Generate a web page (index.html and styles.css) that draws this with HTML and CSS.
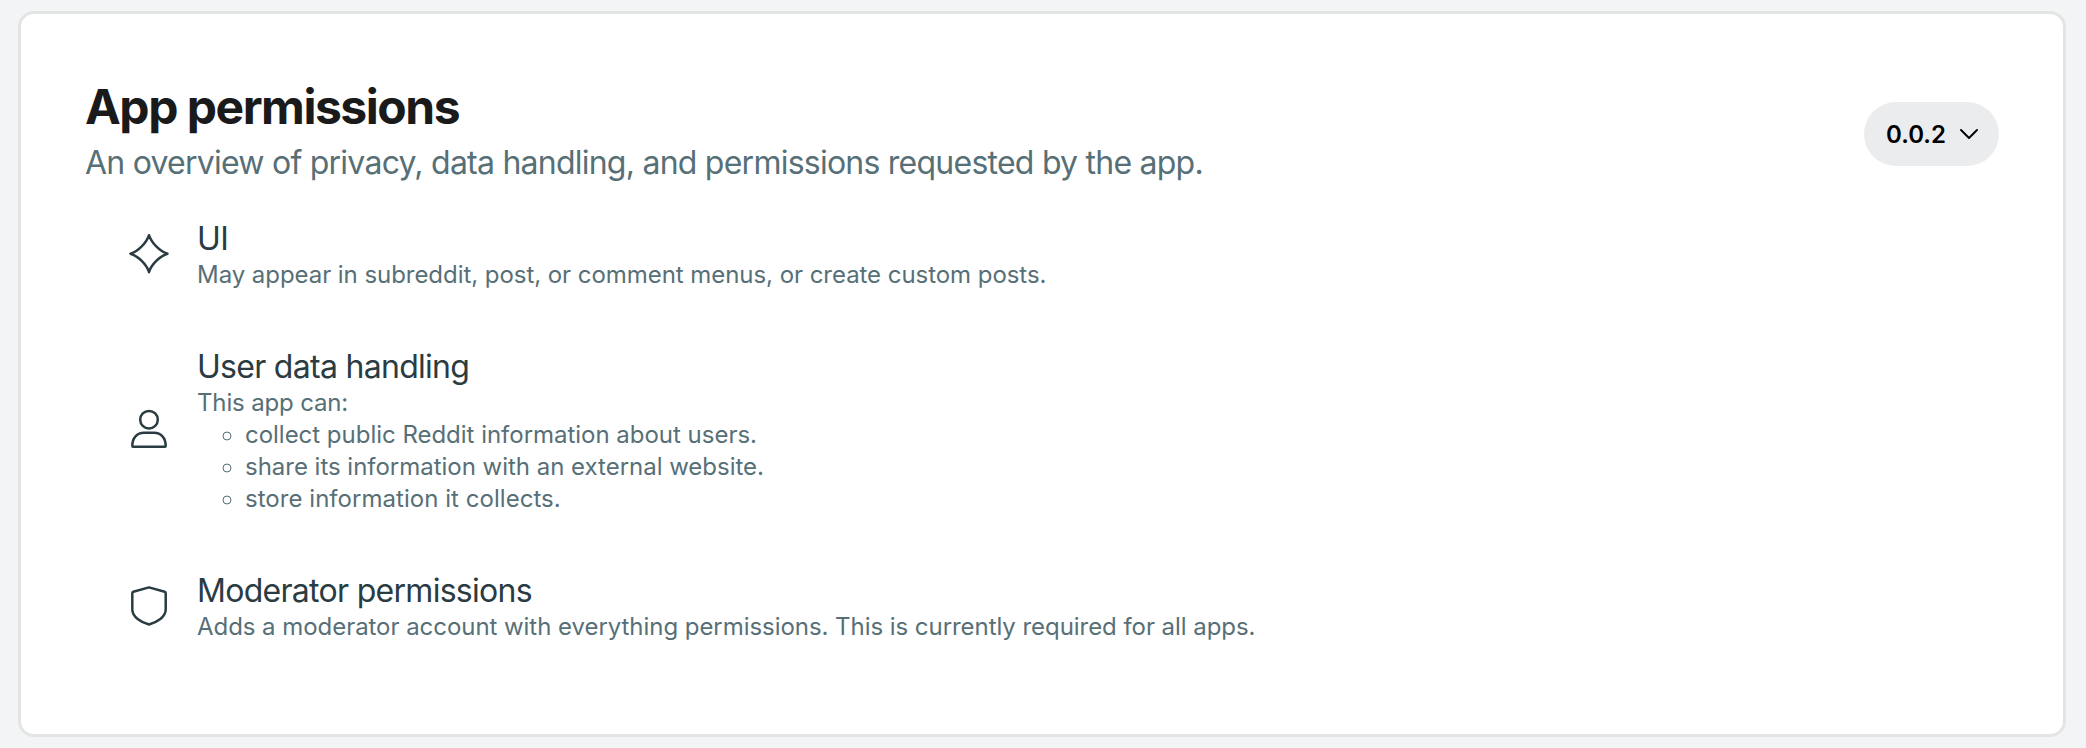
FILE: index.html
```html
<!DOCTYPE html>
<html lang="en"><head><meta charset="utf-8"><title>App permissions</title><link rel="stylesheet" href="styles.css"></head>
<body>
<main class="card">
<header class="header">
<div><h1 class="title">App permissions</h1><p class="subtitle">An overview of privacy, data handling, and permissions requested by the app.</p></div>
<button class="version">0.0.2<svg class="chevron" viewBox="0 0 18 10"><path d="M1 1l8 8 8-8"/></svg></button>
</header>
<ul class="permissions">
<li class="permission">
<svg class="icon" viewBox="0 1.300 42 42"><path d="M21 2.500C23.200 10 32 18.800 39.500 21C32 23.200 23.200 32 21 39.500C18.800 32 10 23.200 2.500 21C10 18.800 18.800 10 21 2.500Z"/></svg>
<div><h2 class="name name-short">UI</h2><p class="text">May appear in subreddit, post, or comment menus, or create custom posts.</p></div>
</li>
<li class="permission">
<svg class="icon" viewBox="0 2.200 42 42"><circle cx="21" cy="11.900" r="8.800"/><path d="M5 39Q4.300 39 4.300 38C4.300 30 9 25 16 25H26C33 25 37.700 30 37.700 38Q37.700 39 37 39Z"/></svg>
<div><h2 class="name">User data handling</h2><p class="text text-intro">This app can:</p>
<ul class="abilities"><li>collect public Reddit information about users.</li><li>share its information with an external website.</li><li class="ability-store">store information it collects.</li></ul></div>
</li>
<li class="permission">
<svg class="icon" viewBox="0 1.200 42 42"><path d="M21 2.600L5.300 6.900Q4.300 7.200 4.300 8.200V25C4.300 32 13 37.500 21 39.700C29 37.500 37.700 32 37.700 25V8.200Q37.700 7.200 36.700 6.900Z"/></svg>
<div><h2 class="name">Moderator permissions</h2><p class="text">Adds a moderator account with everything permissions. This is currently required for all apps.</p></div>
</li>
</ul>
</main>
</body></html>
```
FILE: styles.css
```css
* { box-sizing: border-box; }
body { margin: 0; padding: 11px 20px 11px 18px; height: 748px; background: #f2f4f5; font-family: Inter, sans-serif; }
h1, h2, p, ul { margin: 0; padding: 0; font-weight: 400; }
ul { list-style: none; }
.card { height: 726px; padding: 64px 64px 0; border: 3px solid #e3e4e4; border-radius: 16px; background: #fff; }
.header { display: flex; justify-content: space-between; align-items: flex-start; height: 108px; }
.title { margin-bottom: 3px; font-size: 48px; line-height: 58px; font-weight: 700; letter-spacing: -1.48px; color: #1a1a1b; white-space: nowrap; }
.subtitle { font-size: 32px; line-height: 48px; letter-spacing: -0.76px; color: #576f76; white-space: nowrap; }
.version { display: flex; align-items: center; justify-content: space-between; width: 135px; height: 64px; margin: 24px 0 0; padding: 0 21px 0 22px; border: 0; border-radius: 32px; background: #ebecee; color: #000; font: 600 24px Inter, sans-serif; }
.chevron { width: 18px; height: 10px; fill: none; stroke: #000; stroke-width: 1.9; stroke-linecap: round; stroke-linejoin: round; }
.permissions { padding: 33px 0 0 43px; }
.permission { display: flex; align-items: center; gap: 27px; margin-bottom: 56px; white-space: nowrap; }
.icon { width: 42px; height: 42px; overflow: visible; fill: none; stroke: #2a3c42; stroke-width: 2.5; stroke-linejoin: round; }
.name { font-size: 32px; line-height: 40px; letter-spacing: -0.71px; color: #2a3c42; }
.name-short { letter-spacing: -0.6px; }
.text, .abilities { font-size: 24px; line-height: 32px; color: #576f76; }
.text { letter-spacing: -0.05px; }
.text-intro { letter-spacing: -0.15px; }
.abilities { list-style: circle; padding-left: 48px; letter-spacing: -0.02px; }
.ability-store { letter-spacing: 0.04px; }
```
